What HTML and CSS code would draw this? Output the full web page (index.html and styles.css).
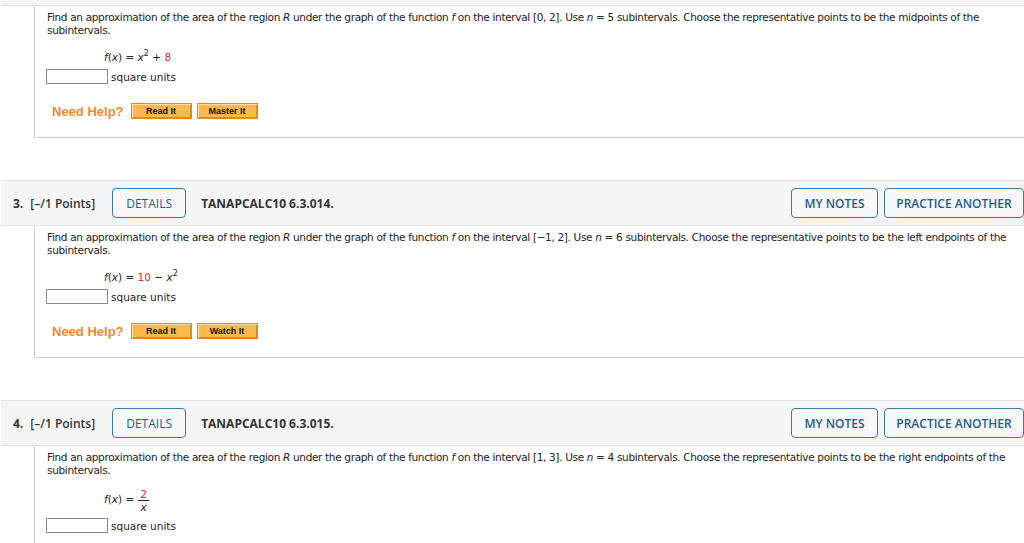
FILE: index.html
```html
<!DOCTYPE html>
<html lang="en">
<head>
    <meta charset="UTF-8">
    <title>Section 6.3 Homework</title>
    <link rel="stylesheet" href="styles.css">
</head>
<body>
    <div class="page">
        <div class="question">
            <div class="q-header stub"></div>
            <div class="q-body">
                <p class="prompt">Find an approximation of the area of the region <i>R</i> under the graph of the function <i>f</i> on the interval [0, 2]. Use <i>n</i> = 5 subintervals. Choose the representative points to be the midpoints of the subintervals.</p>
                <div class="formula"><i>f</i>(<i>x</i>) = <i>x</i><sup>2</sup> + <span class="given">8</span></div>
                <div class="answer"><input type="text" class="answer-box"><span>square units</span></div>
                <div class="help">
                    <span class="help-label">Need Help?</span>
                    <button class="help-btn">Read It</button>
                    <button class="help-btn">Master It</button>
                </div>
            </div>
        </div>

        <div class="question">
            <div class="q-header">
                <span class="q-num">3.</span>
                <span class="q-points">[&ndash;/1 Points]</span>
                <button class="outline-btn details">DETAILS</button>
                <span class="q-code">TANAPCALC10 6.3.014.</span>
                <div class="q-actions">
                    <button class="outline-btn">MY NOTES</button>
                    <button class="outline-btn">PRACTICE ANOTHER</button>
                </div>
            </div>
            <div class="q-body">
                <p class="prompt">Find an approximation of the area of the region <i>R</i> under the graph of the function <i>f</i> on the interval [&minus;1, 2]. Use <i>n</i> = 6 subintervals. Choose the representative points to be the left endpoints of the subintervals.</p>
                <div class="formula"><i>f</i>(<i>x</i>) = <span class="given">10</span> &minus; <i>x</i><sup>2</sup></div>
                <div class="answer"><input type="text" class="answer-box"><span>square units</span></div>
                <div class="help">
                    <span class="help-label">Need Help?</span>
                    <button class="help-btn">Read It</button>
                    <button class="help-btn">Watch It</button>
                </div>
            </div>
        </div>

        <div class="question">
            <div class="q-header">
                <span class="q-num">4.</span>
                <span class="q-points">[&ndash;/1 Points]</span>
                <button class="outline-btn details">DETAILS</button>
                <span class="q-code">TANAPCALC10 6.3.015.</span>
                <div class="q-actions">
                    <button class="outline-btn">MY NOTES</button>
                    <button class="outline-btn">PRACTICE ANOTHER</button>
                </div>
            </div>
            <div class="q-body">
                <p class="prompt">Find an approximation of the area of the region <i>R</i> under the graph of the function <i>f</i> on the interval [1, 3]. Use <i>n</i> = 4 subintervals. Choose the representative points to be the right endpoints of the subintervals.</p>
                <div class="formula frac-formula">
                    <span><i>f</i>(<i>x</i>) = </span>
                    <span class="frac"><span class="num given">2</span><span class="den"><i>x</i></span></span>
                </div>
                <div class="answer tight"><input type="text" class="answer-box"><span>square units</span></div>
            </div>
        </div>
    </div>
</body>
</html>
```

FILE: styles.css
```css
body {
    margin: 0;
    background-color: white;
    color: #222;
}

.page {
    padding-left: 1px;
}

.question {
    margin-bottom: 42px;
}

.q-header {
    display: flex;
    align-items: center;
    height: 44px;
    background-color: #f5f5f5;
    border-top: 1px solid #e2e2e2;
    border-bottom: 1px solid #e2e2e2;
    font-family: "Open Sans", sans-serif;
    font-size: 12px;
    font-weight: 600;
    color: #333;
}

.q-header.stub {
    height: 5px;
    border-top: none;
}

.q-num {
    margin-left: 12px;
    font-weight: 700;
}

.q-points {
    margin-left: 7px;
}

.outline-btn {
    height: 30px;
    padding: 0;
    background-color: #f7f7f7;
    border: 1px solid #3d79a6;
    border-radius: 4px;
    color: #1d5d8c;
    font-family: "Open Sans", sans-serif;
    font-size: 12px;
    font-weight: 600;
    cursor: pointer;
}

.details {
    margin-left: 17px;
    width: 74px;
    font-weight: 500;
}

.q-code {
    margin-left: 15px;
    font-weight: 700;
}

.q-actions {
    display: flex;
    gap: 6px;
    margin-left: auto;
}

.q-actions .outline-btn:first-child {
    width: 87px;
}

.q-actions .outline-btn:last-child {
    width: 140px;
}

.q-body {
    margin-left: 33px;
    height: 126px;
    padding: 5px 0 0 12px;
    border-left: 1px solid #cfcfcf;
    border-bottom: 1px solid #cfcfcf;
    font-family: "DejaVu Sans", Verdana, sans-serif;
    font-size: 10.5px;
    color: #222;
}

.prompt {
    margin: 0;
    line-height: 13px;
    letter-spacing: -0.33px;
}

.formula {
    margin: 12px 0 0 57px;
    height: 16px;
    line-height: 16px;
}

.formula sup {
    font-size: 8px;
    vertical-align: 5px;
    line-height: 0;
}

.given {
    color: #e8252b;
}

.frac-formula {
    display: flex;
    align-items: center;
    height: 26px;
    margin-top: 9px;
}

.frac {
    display: inline-flex;
    flex-direction: column;
    align-items: center;
    margin-left: 4px;
    margin-top: 2px;
}

.frac .num {
    padding: 0 2px;
    line-height: 12px;
    border-bottom: 1px solid #222;
}

.frac .den {
    line-height: 12px;
}

.answer {
    display: flex;
    align-items: center;
    margin-top: 4px;
    margin-left: -1px;
}

.answer.tight {
    margin-top: 6px;
}

.answer-box {
    width: 62px;
    height: 15px;
    margin: 0 3px 0 0;
    padding: 0;
    border: 1px solid #8a8a8a;
    box-sizing: border-box;
}

.help {
    display: flex;
    align-items: center;
    margin-top: 18px;
    margin-left: 5px;
    height: 18px;
}

.help-label {
    font-family: "Liberation Sans", Arial, sans-serif;
    font-size: 13px;
    font-weight: bold;
    color: #f08a2c;
    margin-right: 7px;
}

.help-btn {
    width: 61px;
    height: 16px;
    margin-right: 5px;
    padding: 0;
    background-color: #fdb84c;
    border: 1px solid #e2861f;
    box-shadow: inset 1px 1px 0 #ffe0a6, inset -1px -1px 0 #d98a2a;
    font-family: "Liberation Sans", Arial, sans-serif;
    font-size: 9px;
    font-weight: bold;
    color: #111;
    cursor: pointer;
}
```
